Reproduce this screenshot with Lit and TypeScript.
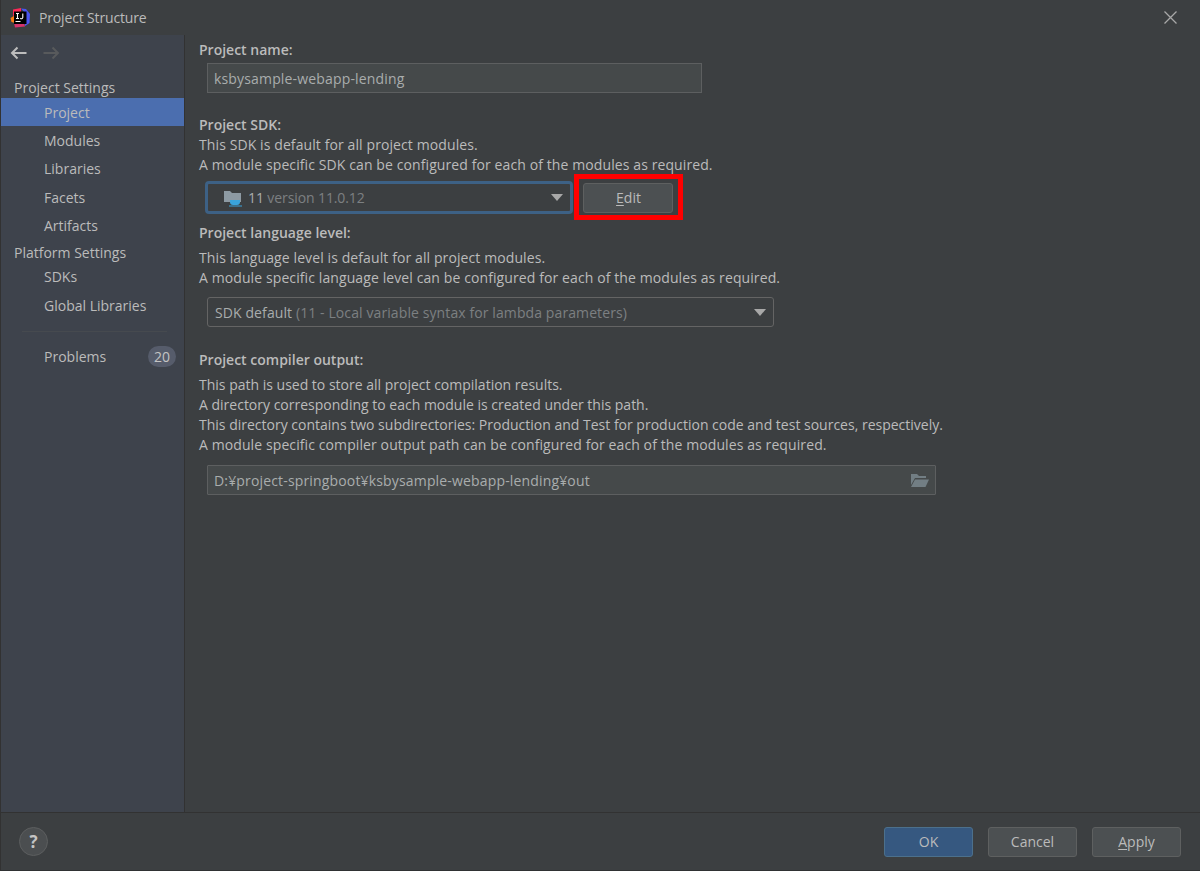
import { LitElement, html, css } from "lit";
import { customElement } from "lit/decorators.js";

@customElement("app-root")
export class AppRoot extends LitElement {
  static styles = css`
    :host { display: block; }
    * { box-sizing: border-box; }
    .win { width: 1200px; height: 871px; background: #3c3f41; color: #bbbbbb; font-family: "Open Sans", "Noto Sans", sans-serif; font-size: 14px; display: flex; flex-direction: column; border-left: 1px solid #323232; border-bottom: 1px solid #2f3133; overflow: hidden; }
    .title { height: 35px; flex: none; display: flex; align-items: center; padding-left: 9px; gap: 9px; color: #bbbbbb; }
    .title .spacer { flex: 1; }
    .title .x { margin-right: 23px; display: block; }
    .logo { display: block; margin-top: 1px; }
    .body { flex: 1; display: flex; min-height: 0; }
    .side { width: 184px; flex: none; background: #3e434c; border-right: 1px solid #323232; display: flex; flex-direction: column; }
    .nav { height: 35px; display: flex; align-items: center; padding-left: 9px; gap: 16px; }
    .nav svg { display: block; }
    .head { height: 25px; padding: 10px 0 0 13px; line-height: 20px; margin-bottom: 3px; display:flex; align-items:center; }
    .item { height: 28.4px; display: flex; align-items: center; padding-left: 43px; color: #bbbbbb; }
    .item.sel { background: #4b6eaf; }
    .item.sdks { height: 24px; }
    .item.glob { height: 33px; }
    .head2 { height: 25px; padding: 0 0 0 13px; display: flex; align-items: center; }
    .sep { height: 1px; margin: 9px 17px 11px 21px; background: #464a4f; }
    .prob { height: 28px; display: flex; align-items: center; padding: 0 8px 0 43px; justify-content: space-between; }
    .badge { width: 28px; height: 21px; border-radius: 11px; background: #565c6b; display: flex; align-items: center; justify-content: center; color: #c4c4c4; }
    .main { flex: 1; padding: 5px 0 0 14px; background: #3c3f41; }
    .l { line-height: 20px; height: 20px; white-space: nowrap; }
    .w { letter-spacing: .1px; }
    .b { font-weight: 600; }
    .after { margin-top: 5px; }
    .field { margin-left: 8px; height: 30px; background: #45494a; border: 1.5px solid #5d5f60; display: flex; align-items: center; padding-left: 6px; color: #a9adad; white-space: nowrap; letter-spacing: .16px; }
    .f1 { width: 495px; margin-top: 3px; margin-bottom: 22px; }
    .f3 { width: 729px; margin-top: 10px; justify-content: space-between; padding-right: 5px; border-radius: 1px; }
    .sdkrow { display: flex; align-items: center; margin: -1px 0 0 6px; height: 46px; }
    .combo { height: 30px; background: #3c3f41; display: flex; align-items: center; justify-content: space-between; border: 1px solid #646464; border-radius: 3px; padding: 0 7px 0 7px; white-space: nowrap; }
    .sdk { width: 368px; height: 33px; margin-top: 1px; border: 3px solid #3d6185; border-radius: 4px; padding-left: 15px; letter-spacing: -.1px; }
    .dim { color: #7c8082; }
    .txt { color: #a9adad; }
    .cl { display: flex; align-items: center; gap: 5px; }
    .red { margin-left: 1px; width: 109px; height: 46px; border: 5px solid #ff0000; padding: 4px; }
    .btn { height: 30px; border: 1px solid #5e6060; border-radius: 3px; background: #4c5052; display: flex; align-items: center; justify-content: center; color: #bbbbbb; }
    .red .btn { width: 90px; padding: 0 0 1px 1px; }
    u { text-underline-offset: 2px; }
    .lbl2 { margin-top: 3px; }
    .lang { width: 567px; margin: 9px 0 23px 8px; letter-spacing: .1px; }
    .foot { height: 58px; flex: none; border-top: 1px solid #323232; display: flex; align-items: center; padding: 0 19px 0 18px; gap: 15px; }
    .help { width: 29px; height: 29px; border-radius: 50%; background: #4b4e50; border: 1px solid #5c5e5f; color: #c4c4c4; font-weight: 700; font-size: 17px; display: flex; align-items: center; justify-content: center; margin-right: auto; }
    .foot .btn { width: 89px; }
    .ok { background: #365880; border-color: #4c708c; }
    .ttxt { font-size: 14px; letter-spacing: -.15px; }
  `;

  render() {
    return html`<div class="win">
      <div class="title">
        <svg class="logo" width="20" height="20" viewBox="0 0 20 20">
          <path d="M3 1.5 L11 0 L11 4 L3 8Z" fill="#fe2857"/>
          <path d="M11 0.5 L16 1 L20 6 L19.5 15 L15 18 L14 4Z" fill="#4a55f0"/>
          <path d="M0.5 10 L4.5 7.5 L5 15 L1.5 14Z" fill="#f97a12"/>
          <path d="M4 15 L14 15 L15 18.5 L5 19.5Z" fill="#d6336c"/>
          <rect x="4" y="3.5" width="12.5" height="12.5" fill="#000"/>
          <rect x="5.5" y="13" width="5" height="1" fill="#fff"/>
          <path d="M6 5.5h3M7.5 5.5v5M6 10.5h3M12.8 5.5v4a1.3 1.3 0 0 1-2.4 .6" stroke="#fff" stroke-width="1.1" fill="none"/>
        </svg>
        <span class="ttxt">Project Structure</span>
        <span class="spacer"></span>
        <svg class="x" width="13" height="13" viewBox="0 0 13 13"><path d="M.5.5l12 12M12.5.5l-12 12" stroke="#a8a8a8" stroke-width="1.3" fill="none"/></svg>
      </div>
      <div class="body">
        <div class="side">
          <div class="nav">
            <svg width="17" height="14" viewBox="0 0 17 14"><path d="M16.5 7H2M7.5 1.5L2 7l5.5 5.5" stroke="#bdbdbd" stroke-width="2" fill="none"/></svg>
            <svg width="17" height="14" viewBox="0 0 17 14"><path d="M.5 7H15M9.5 1.5L15 7l-5.5 5.5" stroke="#585a5c" stroke-width="2" fill="none"/></svg>
          </div>
          <div class="head">Project Settings</div>
          <div class="item sel">Project</div>
          <div class="item">Modules</div>
          <div class="item">Libraries</div>
          <div class="item">Facets</div>
          <div class="item">Artifacts</div>
          <div class="head2">Platform Settings</div>
          <div class="item sdks">SDKs</div>
          <div class="item glob">Global Libraries</div>
          <div class="sep"></div>
          <div class="prob"><span>Problems</span><span class="badge">20</span></div>
        </div>
        <div class="main">
          <div class="l b">Project name:</div>
          <div class="field f1">ksbysample-webapp-lending</div>
          <div class="l b">Project SDK:</div>
          <div class="l w">This SDK is default for all project modules.</div>
          <div class="l w">A module specific SDK can be configured for each of the modules as required.</div>
          <div class="sdkrow">
            <div class="combo sdk">
              <span class="cl">
                <svg width="20" height="18" viewBox="0 0 20 18"><path d="M1 2h6l2 2h9v9H1z" fill="#8d9aa3"/><path d="M7 11h10v2a3 3 0 0 1-3 3h-4a3 3 0 0 1-3-3z" fill="#3aa4dc"/><path d="M6 16.5h13v1H6z" fill="#3aa4dc"/></svg>
                <span><span class="txt">11</span> <span class="dim">version 11.0.12</span></span>
              </span>
              <svg width="12" height="7" viewBox="0 0 12 7"><path d="M0 0h12L6 7z" fill="#a8a8a8"/></svg>
            </div>
            <div class="red"><div class="btn"><span><u>E</u>dit</span></div></div>
          </div>
          <div class="l b lbl2">Project language level:</div>
          <div class="l w after">This language level is default for all project modules.</div>
          <div class="l w">A module specific language level can be configured for each of the modules as required.</div>
          <div class="combo lang">
            <span><span class="txt">SDK default</span> <span class="dim">(11 - Local variable syntax for lambda parameters)</span></span>
            <svg width="12" height="7" viewBox="0 0 12 7"><path d="M0 0h12L6 7z" fill="#a8a8a8"/></svg>
          </div>
          <div class="l b">Project compiler output:</div>
          <div class="l after">This path is used to store all project compilation results.</div>
          <div class="l">A directory corresponding to each module is created under this path.</div>
          <div class="l">This directory contains two subdirectories: Production and Test for production code and test sources, respectively.</div>
          <div class="l w">A module specific compiler output path can be configured for each of the modules as required.</div>
          <div class="field f3">
            <span>D:¥project-springboot¥ksbysample-webapp-lending¥out</span>
            <svg width="20" height="15" viewBox="0 0 20 15"><path d="M1 1h6l2 2h7v2H5L1 12z" fill="#727e84"/><path d="M5 6.5h14L15.5 14H1z" fill="#727e84"/></svg>
          </div>
        </div>
      </div>
      <div class="foot">
        <div class="help">?</div>
        <div class="btn ok">OK</div>
        <div class="btn">Cancel</div>
        <div class="btn"><span><u>A</u>pply</span></div>
      </div>
    </div>`;
  }
}
